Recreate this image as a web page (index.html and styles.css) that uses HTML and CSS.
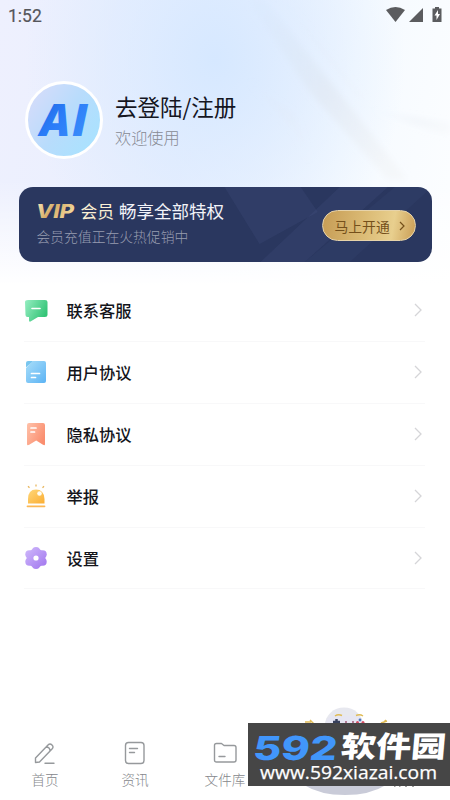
FILE: index.html
```html
<!DOCTYPE html>
<html lang="zh-CN">
<head>
<meta charset="utf-8">
<title>我的</title>
<link rel="stylesheet" href="styles.css">
</head>
<body>
<main class="screen">
  <svg class="backdrop" viewBox="0 0 450 280" preserveAspectRatio="none">
    <defs>
      <linearGradient id="ray" x1="0" y1="0" x2="1" y2="1"><stop stop-color="#cfe2f7" stop-opacity=".1"/><stop offset=".5" stop-color="#dde3ec" stop-opacity=".45"/><stop offset="1" stop-color="#eee" stop-opacity=".25"/></linearGradient>
      <filter id="soft" x="-20%" y="-20%" width="140%" height="140%"><feGaussianBlur stdDeviation="3"/></filter>
    </defs>
    <g fill="url(#ray)" filter="url(#soft)">
      <path d="M247 0h18l70 88 73 92h-20L310 92z"/>
      <path opacity=".3" d="M280 0h5l85 105-12-8zM248 80l48 35 14 48-14-30z"/>
      <path opacity=".5" d="M372 110l78 13v14z"/>
    </g>
  </svg>
  <header class="status">
    <span class="clock">1:52</span>
    <svg class="status-icons" viewBox="0 0 58 18" fill="#5b5c5f">
      <path d="M1 4q9.500-6 19 0l-9.500 12z"/>
      <path d="M24 16L38 2v14z"/>
      <path d="M50 1h4v1.500h2.500V16h-9V2.500H50z"/>
      <path d="M53 4l-3.500 5.500h2V14L55 8h-2z" fill="#fff"/>
    </svg>
  </header>
  <section class="profile">
    <div class="avatar">
      <svg viewBox="0 0 72 72">
        <defs><linearGradient id="ai" x2="1" y2="1"><stop stop-color="#1b5fd8"/><stop offset=".45" stop-color="#2a7cf8"/><stop offset="1" stop-color="#3f93fb"/></linearGradient></defs>
        <text x="12" y="52" textLength="48" fill="url(#ai)">AI</text>
      </svg>
    </div>
    <div class="greeting">
      <h1>去登陆/注册</h1>
      <p>欢迎使用</p>
    </div>
  </section>
  <section class="vip">
    <svg class="vip-shine" viewBox="0 0 412 75" preserveAspectRatio="none" fill="#7c92c8">
      <path opacity=".08" d="M205 0h76l17 25-58 32z"/>
      <path opacity=".08" d="M320 0h48L285 75h-44z"/>
      <path opacity=".05" d="M375 0h37L330 75h-45z"/>
    </svg>
    <div class="vip-copy">
      <div class="vip-title">
        <svg class="vip-mark" viewBox="0 0 44 25"><defs><linearGradient id="gold" x2="1" y2=".5"><stop stop-color="#fff0c4"/><stop offset=".5" stop-color="#d5ad69"/><stop offset="1" stop-color="#f4d89c"/></linearGradient></defs><text x="-1" y="19.500" textLength="38" lengthAdjust="spacingAndGlyphs" fill="url(#gold)">VIP</text></svg>
        <span class="member">会员</span><span>畅享全部特权</span>
      </div>
      <p>会员充值正在火热促销中</p>
    </div>
    <div class="vip-button"><span>马上开通</span><svg viewBox="0 0 6 10"><path d="M1 1l4 4-4 4"/></svg></div>
  </section>
  <ul class="menu">
    <li>
      <svg class="icon" viewBox="0 0 24 24"><defs><linearGradient id="g1" x2="1" y2=".5"><stop stop-color="#96eec2"/><stop offset="1" stop-color="#34c477"/></linearGradient></defs><path fill="url(#g1)" d="M4 2h17q2.500 0 2.500 2v13q0 2-2.500 2h-7l-7.500 4.500Q5 24 5 22.500V19H3.500q-2 0-2-2L1 4q0-2 3-2z"/><path d="M8 10.500h8" stroke="#fff" stroke-width="1.600" stroke-linecap="round"/></svg>
      <span>联系客服</span><svg class="arrow" viewBox="0 0 8 14"><path d="M1 1l6 6-6 6"/></svg>
    </li>
    <li>
      <svg class="icon" viewBox="0 0 24 24"><defs><linearGradient id="g2" x2="1" y2="1"><stop stop-color="#a9def9"/><stop offset="1" stop-color="#5cb3f4"/></linearGradient></defs><path fill="url(#g2)" d="M8.500 1H20q2 0 2 2v18q0 2-2 2H4q-2 0-2-2V8z"/><path fill="#79c6ef" d="M2 6.500V3q0-2 2-2h4q1 0 0 1L3 6.500q-1 1-1 0z"/><path d="M7.500 13.500h8M7.500 17.500h4" stroke="#fff" stroke-width="1.700" stroke-linecap="round"/></svg>
      <span>用户协议</span><svg class="arrow" viewBox="0 0 8 14"><path d="M1 1l6 6-6 6"/></svg>
    </li>
    <li>
      <svg class="icon" viewBox="0 0 24 24"><defs><linearGradient id="g3" x2="1" y2=".6"><stop stop-color="#ffc2aa"/><stop offset="1" stop-color="#fa8e6f"/></linearGradient></defs><path fill="url(#g3)" d="M5 1h14q2 0 2 2v19q0 2-2 .8l-6.800-4.300-7 4.300Q3 24 3 22V3q0-2 2-2z"/><path d="M7 6h5M7 10h3.500" stroke="#fff" stroke-width="1.700" stroke-linecap="round"/></svg>
      <span>隐私协议</span><svg class="arrow" viewBox="0 0 8 14"><path d="M1 1l6 6-6 6"/></svg>
    </li>
    <li>
      <svg class="icon" viewBox="0 0 24 24"><defs><linearGradient id="g4" x2="1" y2="1"><stop stop-color="#ffd779"/><stop offset="1" stop-color="#fbae33"/></linearGradient></defs><path fill="url(#g4)" d="M4 19.500V15q0-9.500 8-9.500t8.500 9.500v4.500z"/><path d="M3.500 22.300h17" stroke="#fcb854" stroke-width="1.800" stroke-linecap="round"/><path d="M4 2.200l1.500 1.500M12 .5v2M20 2.200l-1.500 1.500" stroke="#e8b760" stroke-width="1.300"/><circle cx="15.500" cy="9.500" r="2.300" fill="#fffdf2"/></svg>
      <span>举报</span><svg class="arrow" viewBox="0 0 8 14"><path d="M1 1l6 6-6 6"/></svg>
    </li>
    <li>
      <svg class="icon" viewBox="0 0 24 24"><defs><linearGradient id="g5" gradientUnits="userSpaceOnUse" x1="1" y1="1" x2="23" y2="23"><stop stop-color="#d0bafb"/><stop offset="1" stop-color="#a074ee"/></linearGradient></defs><g fill="url(#g5)"><circle cx="12" cy="12" r="9.400"/><circle cx="12" cy="5" r="4"/><circle cx="12" cy="19" r="4"/><circle cx="5.300" cy="8.200" r="4"/><circle cx="18.700" cy="8.200" r="4"/><circle cx="5.300" cy="15.800" r="4"/><circle cx="18.700" cy="15.800" r="4"/></g><circle cx="12" cy="12" r="2.600" fill="#fff"/></svg>
      <span>设置</span><svg class="arrow" viewBox="0 0 8 14"><path d="M1 1l6 6-6 6"/></svg>
    </li>
  </ul>
  <nav class="tabs">
    <div class="tab"><svg viewBox="0 0 24 24"><path d="M2.500 21.500V17L15 4q2-2 4 0t0 4L6.500 21zM13 6q4 0 4 4M12 22.300h9"/></svg><span>首页</span></div>
    <div class="tab"><svg viewBox="0 0 24 24"><rect x="2.500" y="1.500" width="18.500" height="21" rx="3"/><path d="M6.500 7.500h8M6.500 11.500h5"/></svg><span>资讯</span></div>
    <div class="tab"><svg viewBox="0 0 24 24"><path d="M1.500 19V4.500q0-2 2-2h5l2.500 2h10q2 0 2 2V19q0 2-2 2h-17.500q-2 0-2-2zM6 15.500h6"/></svg><span>文件库</span></div>
  </nav>
  <svg class="mascot" viewBox="0 0 120 100">
    <path d="M0 84h82q-16 10-41 10T0 84z" fill="#c9cbd8"/>
    <ellipse cx="40" cy="24" rx="19" ry="17.500" fill="#e7e8ef"/>
    <rect x="22" y="15" width="37" height="19" rx="8" fill="#e6e6f3"/>
    <path d="M31 15q3-2 7-.5M52 14.500q4-1.500 7 .5M6 19l4 4M1 21h6M82 19l-4 4M83 20l-6 2" fill="none" stroke="#dfbb55" stroke-width="1.500"/>
    <path d="M29 21h7M32.500 18v5" stroke="#38415d" stroke-width="2.500"/>
    <path d="M41 21h2M48 21h2" stroke="#a05a78" stroke-width="1.300"/>
    <circle cx="53.500" cy="21.500" r="1.500" fill="#d54c62"/><circle cx="59" cy="21.500" r="1.500" fill="#d54c62"/><circle cx="56" cy="19" r="1.400" fill="#4f77ba"/>
    <path d="M90 85.300h1.500M95 85.300h1.500M101 85.300h2M108 85.300h2" stroke="#888" stroke-width="1"/>
  </svg>
  <svg class="watermark" viewBox="0 0 202 63">
    <text class="digits" transform="translate(4 37) skewX(-7)" textLength="84" lengthAdjust="spacingAndGlyphs">592</text>
    <text class="name" transform="translate(92 37) skewX(-5)" y="-3" textLength="105" lengthAdjust="spacingAndGlyphs">软件园</text>
    <text class="site" x="12" y="56" textLength="177" lengthAdjust="spacingAndGlyphs">www.592xiazai.com</text>
  </svg>
</main>
</body>
</html>
```
FILE: styles.css
```css
* { box-sizing: border-box; margin: 0; padding: 0; }
body {
  font-family: "Noto Sans CJK SC", sans-serif;
  background: #fff;
}
.screen {
  position: relative;
  width: 450px;
  height: 800px;
  overflow: hidden;
  display: flex;
  flex-direction: column;
  background:
    linear-gradient(to bottom, transparent 180px, #fff 285px),
    radial-gradient(ellipse 190px 230px at 215px 60px, #d6e8ff 0, rgba(218,234,255,.7) 40%, rgba(240,246,255,0) 100%),
    linear-gradient(100deg, #eef0fe 0, #e9effe 35%, #f5faff 62%, #fdfeff 88%);
}
.backdrop { position: absolute; left: 0; top: 0; width: 450px; height: 280px; }
.status {
  position: relative;
  height: 32px;
  padding: 0 7px 0 8px;
  display: flex;
  align-items: center;
  justify-content: space-between;
}
.clock { font: 400 17.500px/32px Roboto, sans-serif; color: #55565b; -webkit-text-stroke: .2px #55565b; }
.status-icons { width: 58px; height: 18px; margin-bottom: 2px; }
.profile {
  position: relative;
  height: 155px;
  padding: 49px 0 0 25px;
  display: flex;
  gap: 12px;
}
.avatar {
  width: 78px;
  height: 78px;
  border: 3px solid #fff;
  border-radius: 50%;
  background: linear-gradient(125deg, #d7dcfa 5%, #b8dcfc 50%, #a7e3ff 95%);
}
.avatar svg { display: block; width: 72px; height: 72px; }
.avatar text { font: italic 800 45px "Open Sans", sans-serif; }
.greeting { padding-top: 9px; }
.greeting h1 { font-size: 22.500px; line-height: 33px; font-weight: 400; color: #15161f; white-space: nowrap; }
.greeting p { font-size: 16.200px; line-height: 24px; font-weight: 300; color: #878a93; margin-top: 2px; }
.vip {
  position: relative;
  width: 413px;
  height: 75px;
  margin: 0 0 1px 18.500px;
  flex: none;
  border-radius: 14px;
  background: #2a375f;
  overflow: hidden;
  display: flex;
  justify-content: space-between;
  padding: 0 16px 0 18px;
}
.vip-shine { position: absolute; left: 0; top: 0; width: 100%; height: 100%; }
.vip-copy { position: relative; padding-top: 11px; }
.vip-title { display: flex; align-items: center; height: 25px; font-size: 17.500px; color: #f2f3f8; white-space: nowrap; }
.vip-mark { width: 44px; height: 25px; overflow: visible; }
.vip-mark text { font: italic 800 19px Inter, sans-serif; }
.vip-title .member { font-size: 16.800px; color: #fbf0d4; margin-right: 5px; }
.vip-copy p { font-size: 13.800px; line-height: 20px; font-weight: 300; color: #979cb0; margin-top: 3px; }
.vip-button {
  position: relative;
  width: 94px;
  height: 31px;
  margin-top: 23px;
  border-radius: 16px;
  border: 1.500px solid #e6d3aa;
  background: linear-gradient(100deg, #c69c55, #dbbb75 45%, #e8cf8e 75%, #ca9d55);
  display: flex;
  align-items: center;
  padding: 0 10px 0 12px;
  justify-content: space-between;
  font-size: 13.800px;
  color: #75501b;
}
.vip-button svg { width: 6px; height: 10px; overflow: visible; }
.vip-button path { fill: none; stroke: #75501b; stroke-width: 1.200; }
.menu {
  position: relative;
  list-style: none;
  margin: 17px 25px 0 24px;
}
.menu li {
  height: 61.900px;
  display: flex;
  align-items: center;
  border-bottom: 1px solid #f8f8f9;
  font-size: 16.300px;
  font-weight: 500;
  color: #14151b;
}
.menu span { flex: 1; margin-left: 18.500px; }
.icon { width: 24px; height: 24px; }
.arrow { width: 8px; height: 14px; margin-right: 3px; }
.arrow path { fill: none; stroke: #d5d5d8; stroke-width: 1.300; }
.tabs {
  position: relative;
  margin-top: auto;
  height: 61px;
  display: grid;
  grid-template-columns: repeat(5, 90px);
}
.tab { display: flex; flex-direction: column; align-items: center; gap: 4px; font-size: 13.600px; line-height: 20px; font-weight: 300; color: #85878b; }
.tab svg { width: 24px; height: 24px; margin-top: 2px; }
.tab path, .tab rect { fill: none; stroke: #96999c; stroke-width: 1.400; stroke-linecap: round; stroke-linejoin: round; }
.mascot { position: absolute; left: 304px; top: 701px; width: 120px; height: 100px; }
.watermark {
  position: absolute;
  left: 248px;
  top: 723px;
  width: 202px;
  height: 63px;
  background: #464646;
}
.digits { font: 800 33px Inter, sans-serif; fill: #4196fb; }
.name { font: 900 29px "Noto Sans CJK SC", sans-serif; fill: #fff; }
.site { font: 18.500px "Open Sans", sans-serif; fill: #fff; stroke: #fff; stroke-width: .25; }
```
